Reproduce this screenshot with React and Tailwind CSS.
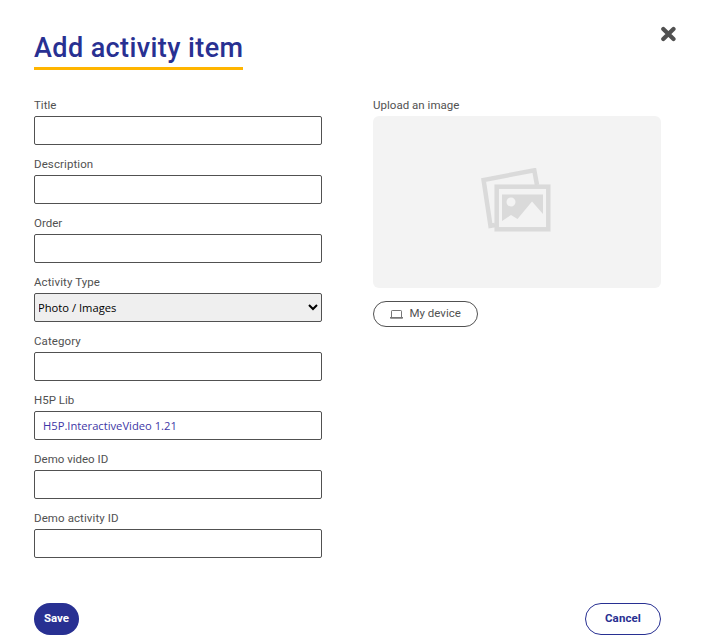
function Label({ children, htmlFor, tracking = "tracking-[0.1px]" }) {
  return (
    <label htmlFor={htmlFor} className={`block h-4 self-start whitespace-nowrap text-[11.5px] leading-[17px] text-[#515151] ${tracking}`}>
      {children}
    </label>
  );
}

const control =
  "mt-[3px] block h-[29px] w-full rounded-[2px] border border-[#515151] font-['Open_Sans',sans-serif] text-[11.2px] outline-none";

function TextField({ id, label, value, tracking }) {
  return (
    <div className="flex flex-col">
      <Label htmlFor={id} tracking={tracking}>{label}</Label>
      <input id={id} type="text" defaultValue={value} className={`${control} bg-white px-2 text-[#3d36a5]`} />
    </div>
  );
}

function CloseIcon() {
  return (
    <svg width="16" height="16" viewBox="0 0 16 16" fill="none" stroke="#515151" strokeWidth="4.2" strokeLinecap="round">
      <path d="M3.3 2.9l10.2 10.2M13.5 2.9L3.3 13.1" />
    </svg>
  );
}

function PicturesIcon() {
  return (
    <svg width="70" height="65" viewBox="0 0 70 65" className="mr-[2px]">
      <path d="M14 57L9.5 57.8L2.6 12L53.3 2.3L56 17" fill="none" stroke="#dadada" strokeWidth="4.5" />
      <rect x="15.7" y="18.7" width="51.6" height="42.6" fill="#f3f3f3" stroke="#dadada" strokeWidth="4.5" />
      <path d="M21 26.500H62V46L51 33.500L36.5 51L30 47L21 53Z" fill="#dadada" />
      <circle cx="30" cy="34" r="4.500" fill="#f3f3f3" />
    </svg>
  );
}

function LaptopIcon() {
  return (
    <svg width="13" height="9" viewBox="0 0 13 9" fill="none">
      <path d="M1.5 7V1.200q0-.7.7-.7h8.600q.7 0 .7.7V7" stroke="#777" />
      <path d="M0 7h13v1q0 .8-.8.8H.8Q0 8.800 0 8Z" fill="#777" />
    </svg>
  );
}

export default function App() {
  return (
    <main className="flex h-[643px] w-[704px] flex-col overflow-hidden bg-white pl-[34px] font-[Roboto,sans-serif]">
      <header className="flex items-start justify-between pr-[28px]">
        <h1 className="mt-[28px] h-[42px] w-[209px] whitespace-nowrap border-b-[3px] border-[#ffb500] text-[27px] font-medium leading-[41px] tracking-[0.4px] text-[#283092]">
          Add activity item
        </h1>
        <button aria-label="Close" className="mt-[26px]">
          <CloseIcon />
        </button>
      </header>

      <div className="mt-[27px] flex gap-[51px]">
        <form className="flex w-[288px] flex-col gap-[11px]">
          <TextField id="title" label="Title" tracking="tracking-[0px]" />
          <TextField id="description" label="Description" />
          <TextField id="order" label="Order" tracking="tracking-[0px]" />
          <div className="flex flex-col">
            <Label htmlFor="type">Activity Type</Label>
            <select id="type" className={`${control} bg-[#efefef] pr-px text-black -indent-px`}>
              <option>Photo / Images</option>
            </select>
          </div>
          <TextField id="category" label="Category" tracking="tracking-[0.1px]" />
          <TextField id="lib" label="H5P Lib" tracking="tracking-[0px]" value="H5P.InteractiveVideo 1.21" />
          <TextField id="video" label="Demo video ID" tracking="tracking-[0px]" />
          <TextField id="activity" label="Demo activity ID" />
        </form>

        <section className="flex w-[288px] flex-col items-start">
          <Label tracking="tracking-[0.03px]">Upload an image</Label>
          <div className="mt-[3px] flex h-[172px] w-full items-center justify-center rounded-[6px] bg-[#f3f3f3] pb-1">
            <PicturesIcon />
          </div>
          <button className="mt-[13px] flex h-[26px] w-[105px] items-center rounded-full border border-[#515151] pl-4 text-[11.5px] leading-4 text-[#515151]">
            <LaptopIcon />
            <span className="ml-[6.5px] pb-[2px]">My device</span>
          </button>
        </section>
      </div>

      <footer className="mt-[45px] flex justify-between pr-[43px] text-[11.5px] font-bold leading-4">
        <button className="h-8 w-[45px] rounded-[16px] bg-[#283092] pb-[3px] text-white">Save</button>
        <button className="h-8 w-[76px] rounded-[16px] border border-[#283092] pb-[3px] tracking-[0.1px] text-[#283092]">Cancel</button>
      </footer>
    </main>
  );
}
